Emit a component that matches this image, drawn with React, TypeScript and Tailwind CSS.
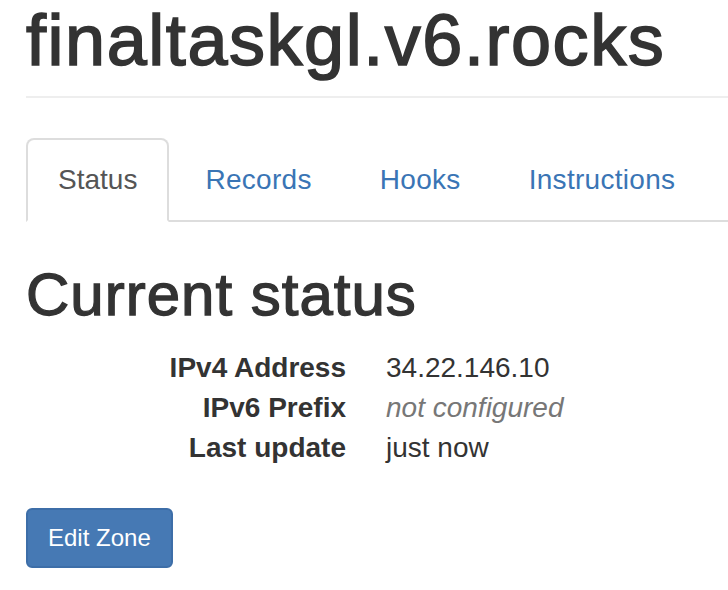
export default function App() {
  const tabs = ["Records", "Hooks", "Instructions"];
  return (
    <div className="min-h-[590px] bg-white pl-[26px] text-[#333] [font-family:'Liberation_Sans',Arial,sans-serif]">
      <div className="border-b-2 border-[#eee] pb-[16px] pt-[1px]">
        <h1 className="text-[72px] font-medium leading-[79px] tracking-[1.55px] [-webkit-text-stroke:1.6px_#333]">finaltaskgl.v6.rocks</h1>
      </div>
      <ul className="mt-[40px] flex border-b-2 border-[#ddd]">
        <li className="-mb-[2px] mr-[4px]">
          <span className="block rounded-t-[8px] border-2 border-[#ddd] border-b-transparent bg-white px-[30px] py-[20px] text-[28px] leading-[40px] text-[#555]">
            Status
          </span>
        </li>
        {tabs.map((t) => (
          <li key={t} className="-mb-[2px] mr-[4px]">
            <a className="block border-2 border-transparent px-[30px] py-[20px] text-[28px] leading-[40px] tracking-[0.3px] text-[#3a75b5]">
              {t}
            </a>
          </li>
        ))}
      </ul>
      <h2 className="mb-[20px] mt-[40px] text-[60px] font-medium leading-[66px] tracking-[1px] [-webkit-text-stroke:1.3px_#333]">Current status</h2>
      <dl className="mb-[40px] grid grid-cols-[320px_1fr] gap-x-[40px] text-[28px] leading-[40px]">
        <dt className="text-right font-bold">IPv4 Address</dt>
        <dd>34.22.146.10</dd>
        <dt className="text-right font-bold">IPv6 Prefix</dt>
        <dd className="italic text-[#777]">not configured</dd>
        <dt className="text-right font-bold">Last update</dt>
        <dd>just now</dd>
      </dl>
      <button className="rounded-[6px] border-2 border-[#3d6ea8] bg-[#4679b4] px-[20px] py-[10px] text-[24px] leading-[36px] text-white">
        Edit Zone
      </button>
    </div>
  );
}
